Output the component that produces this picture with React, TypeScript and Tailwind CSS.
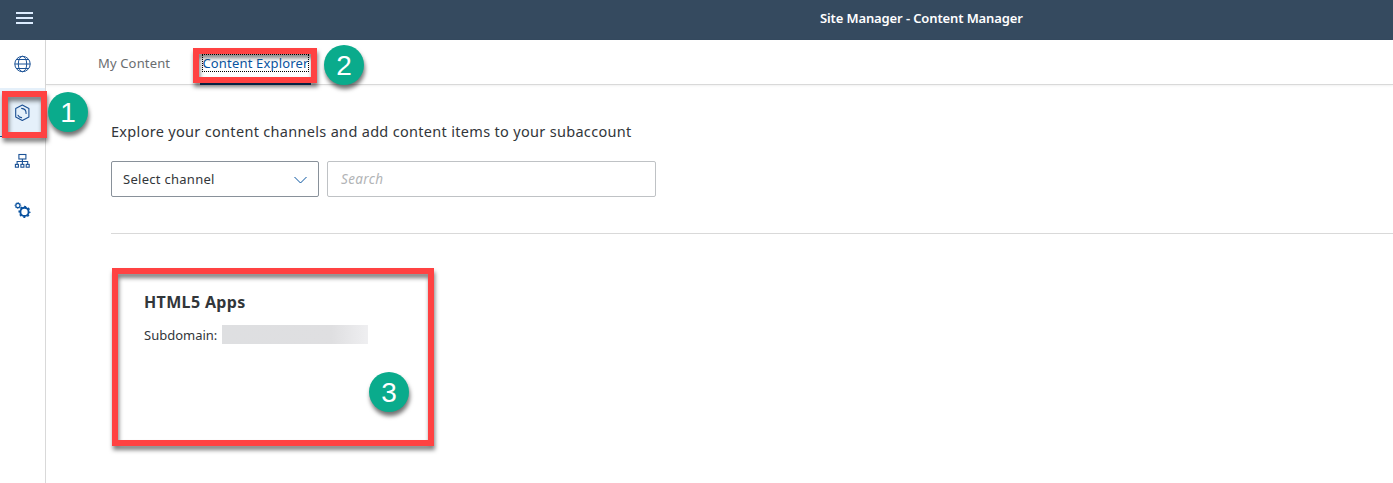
import type { ReactNode } from "react";

function GlobeIcon() {
  return (
    <svg width="18" height="18" viewBox="0 0 18 18" fill="none" stroke="#1b5296" strokeWidth="1">
      <circle cx="9.5" cy="9" r="7.7" />
      <ellipse cx="9.5" cy="9" rx="4.2" ry="7.7" />
      <path d="M1.8 9h15.4M3.1 4.5h12.8M3.1 13.5h12.8" />
    </svg>
  );
}

function ContentIcon() {
  return (
    <svg width="18" height="18" viewBox="0 0 18 18" fill="none" stroke="#1b4f93" strokeWidth="1.1" strokeLinejoin="round" strokeLinecap="round">
      <path d="M9.3 1.1L15.9 4.6V12.9L9.3 16.4L2.7 12.9V4.6Z" />
      <path d="M8.6 4.4C11.6 4.6 13.1 6.6 13.1 9.4M5 11.2C5.7 12.6 6.9 13.5 8.6 13.6" />
    </svg>
  );
}

function HierarchyIcon() {
  return (
    <svg width="16" height="16" viewBox="0 0 16 16" fill="none" stroke="#1b5296" strokeWidth="1.1">
      <rect x="4.9" y="1.5" width="7" height="4.5" />
      <path d="M8.4 6v5M3.1 11.3V8.5h10.6v2.8" />
      <rect x="1.4" y="11.4" width="3" height="2.8" />
      <rect x="6.9" y="11.4" width="3" height="2.8" />
      <rect x="12.2" y="11.4" width="3" height="2.8" />
    </svg>
  );
}

function GearsIcon() {
  return (
    <svg width="18" height="18" viewBox="0 0 18 18" fill="none" stroke="#08519f">
      <circle cx="11.5" cy="10.9" r="4.1" strokeWidth="1.9" />
      <circle cx="11.5" cy="10.9" r="5.3" strokeWidth="1.5" strokeDasharray="2.08 2.082" strokeDashoffset="1.04" />
      <circle cx="4.9" cy="4.5" r="2.1" strokeWidth="1.2" />
      <circle cx="4.9" cy="4.5" r="2.9" strokeWidth="0.9" strokeDasharray="1.14 1.138" strokeDashoffset="0.57" />
    </svg>
  );
}

function Badge({ className, children }: { className: string; children: ReactNode }) {
  return (
    <div
      className={`absolute flex size-10 items-center justify-center rounded-full bg-[#0aab8c] pt-0.5 font-['Liberation_Sans',sans-serif] text-[28px] leading-none text-white shadow-[1px_4px_4px_rgba(0,0,0,0.55)] ${className}`}
    >
      {children}
    </div>
  );
}

function Marker({ className }: { className: string }) {
  return (
    <div
      className={`pointer-events-none absolute border-6 border-[#ff4242] drop-shadow-[1px_4px_2px_rgba(0,0,0,0.5)] ${className}`}
    />
  );
}

export default function App() {
  return (
    <div className="relative flex h-[483px] w-full flex-col overflow-hidden bg-white font-['Noto_Sans',sans-serif] text-sm text-[#32363a]">
      <header className="flex h-10 shrink-0 items-center bg-[#354a5f]">
        <button aria-label="Menu" className="ml-4 flex w-[17px] flex-col gap-[3px] pb-1">
          <span className="h-0.5 bg-[#dcecff]" />
          <span className="h-0.5 bg-[#dcecff]" />
          <span className="h-0.5 bg-[#dcecff]" />
        </button>
        <h1 className="ml-[787px] pb-1 text-[13px] font-semibold tracking-[-0.12px] whitespace-nowrap text-white">
          Site Manager - Content Manager
        </h1>
      </header>
      <div className="flex min-h-0 flex-1">
        <nav className="flex w-[46px] shrink-0 flex-col border-r border-[#d9d9d9] pr-px text-[#0854a0]">
          <div className="flex h-12 items-center justify-center">
            <GlobeIcon />
          </div>
          <div className="-mr-px flex h-[49px] items-center justify-center border-b border-[#0854a0] bg-[#e5f0fa] pt-0.5 pr-px">
            <ContentIcon />
          </div>
          <div className="flex h-12 items-center justify-center">
            <HierarchyIcon />
          </div>
          <div className="flex h-[50px] items-center justify-center">
            <GearsIcon />
          </div>
        </nav>
        <main className="flex min-w-0 flex-1 flex-col">
          <div className="flex h-[45px] shrink-0 border-b border-[#d9d9d9] pl-[52px] text-[13px] shadow-[0_1px_2px_rgba(0,0,0,0.06)]">
            <div className="flex w-[102px] items-center pt-0.5 tracking-[0.15px] whitespace-nowrap text-[#6a6d70]">My Content</div>
            <div className="flex h-[45px] w-[111px] flex-col items-center border-b-2 border-[#0a3a70] pt-3.5 text-[#0854a0]">
              <span className="flex h-[18px] w-[107px] items-center justify-center border border-dotted border-black tracking-[0.18px] whitespace-nowrap">
                Content Explorer
              </span>
            </div>
          </div>
          <div className="flex flex-col pl-[65px]">
            <p className="mt-[34px] h-6 text-[14.5px] leading-6 tracking-[0.31px] whitespace-nowrap">
              Explore your content channels and add content items to your subaccount
            </p>
            <div className="mt-[18px] flex gap-2">
              <div className="flex h-9 w-[208px] items-center justify-between rounded-xs border border-[#89919a] pr-[11px] pl-[11px] text-[13px] tracking-[0.28px]">
                <span>Select channel</span>
                <svg width="14" height="8" viewBox="0 0 14 8" fill="none" stroke="#0854a0" strokeWidth="1" className="mt-0.5">
                  <path d="M1.5 1l6 6 6-6" />
                </svg>
              </div>
              <div className="flex h-9 w-[329px] items-center rounded-xs border border-[#bfc2c5] px-[13px] pt-0.5 text-[13.5px] tracking-[0.35px] text-[#b2b4b6] italic">
                Search
              </div>
            </div>
            <div className="mt-9 border-t border-[#d9d9d9]" />
            <section className="mt-[34px] ml-px flex h-[178px] w-[322px] flex-col pt-[22px] pl-8">
              <h2 className="text-base leading-6 font-bold tracking-[0.35px]">HTML5 Apps</h2>
              <div className="mt-[11px] flex h-[19px] items-center text-[13px]">
                <span className="w-[78px] pt-0.5">Subdomain:</span>
                <span className="h-[19px] w-[146px] bg-linear-to-r from-[#dedfe1] via-[#dfdfe1] via-75% to-[#efeff1]" />
              </div>
            </section>
          </div>
        </main>
      </div>
      <Marker className="top-[91px] left-0.5 h-[47px] w-[45px]" />
      <Marker className="top-12 left-[193px] h-[35px] w-[124px]" />
      <Marker className="top-[268px] left-28 h-[178px] w-[322px]" />
      <Badge className="top-[92px] left-12">1</Badge>
      <Badge className="top-[45px] left-[324px]">2</Badge>
      <Badge className="top-[372px] left-[369px]">3</Badge>
    </div>
  );
}
